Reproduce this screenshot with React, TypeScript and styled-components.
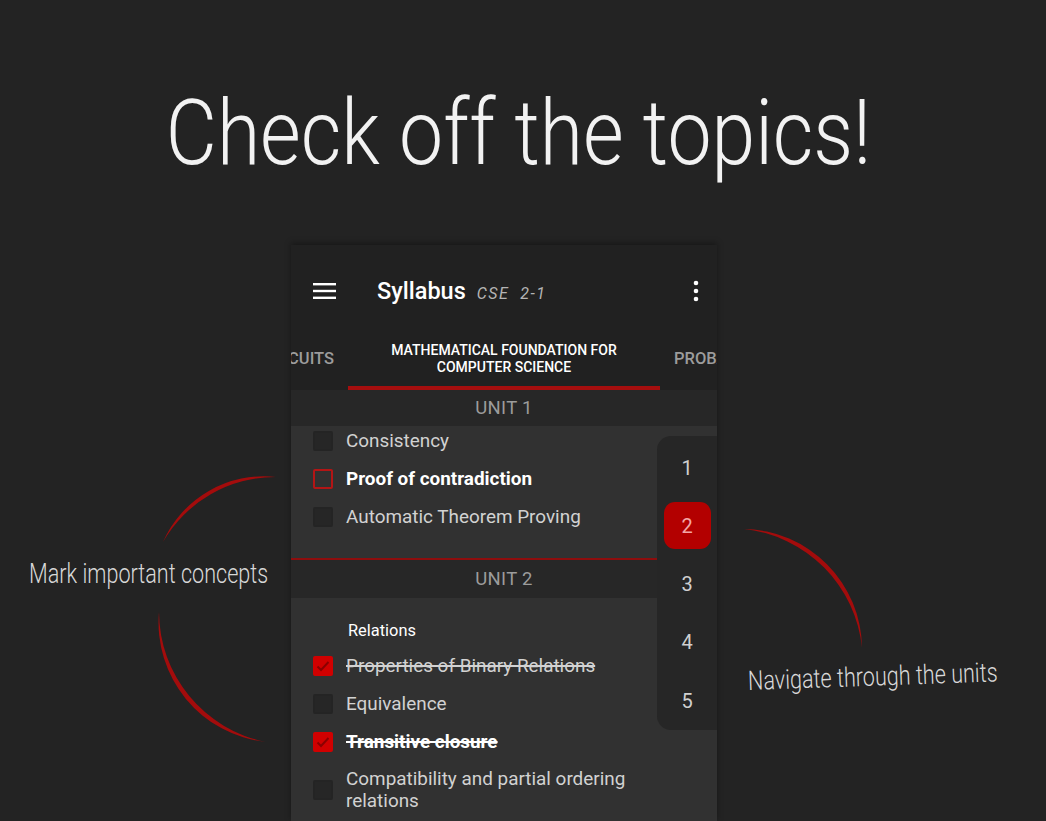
import React from "react";
import styled, { createGlobalStyle } from "styled-components";

const GlobalStyle = createGlobalStyle`
  html, body {
    margin: 0;
    padding: 0;
    background: #232323;
  }
  body {
    font-family: Roboto, "Liberation Sans", sans-serif;
  }
`;

const Page = styled.div`
  position: relative;
  width: 1046px;
  height: 821px;
  overflow: hidden;
  background: #232323;
`;

const Title = styled.h1`
  margin: 0;
  padding: 89px 10px 0 0;
  height: 245px;
  box-sizing: border-box;
  text-align: center;
  font-weight: 300;
  font-size: 90px;
  line-height: 90px;
  color: #f2f2f2;
  white-space: nowrap;
`;

const Condensed = styled.span<{ $scale: number }>`
  display: inline-block;
  transform: scaleX(${(p) => p.$scale});
  transform-origin: center;
`;

const Stage = styled.div`
  display: grid;
  grid-template-columns: 291px 426px 1fr;
  height: 576px;
`;

const Side = styled.div<{ $top: number; $pad: number }>`
  padding-top: ${(p) => p.$top}px;
  padding-left: ${(p) => p.$pad}px;
`;

const Note = styled.div<{ $rotate?: number }>`
  display: inline-block;
  font-weight: 300;
  font-size: 27px;
  line-height: 32px;
  color: #d8d8d8;
  white-space: nowrap;
  transform-origin: left center;
  transform: rotate(${(p) => p.$rotate || 0}deg) scaleX(0.8);
`;

const Phone = styled.div`
  position: relative;
  display: flex;
  flex-direction: column;
  background: #313131;
  box-shadow: 0 -2px 6px rgba(0, 0, 0, 0.35);
  overflow: hidden;
`;

const AppBar = styled.div`
  display: flex;
  align-items: center;
  height: 92px;
  padding: 0 18px 0 22px;
  background: #212121;
`;

const BarTitle = styled.div`
  display: flex;
  align-items: baseline;
  flex: 1;
  margin-left: 40px;
`;

const Heading = styled.span`
  font-size: 23.5px;
  font-weight: 500;
  color: #ffffff;
`;

const Sub = styled.span`
  margin-left: 11px;
  font-size: 16px;
  font-style: italic;
  letter-spacing: 1.5px;
  color: #b4b4b4;
  white-space: pre;
`;

const Tabs = styled.div`
  display: flex;
  justify-content: center;
  height: 53px;
  background: #212121;
  overflow: hidden;
`;

const Tab = styled.div<{ $active?: boolean; $align?: string }>`
  flex: 0 0 auto;
  width: ${(p) => (p.$active ? "312px" : "200px")};
  min-width: 0;
  overflow: hidden;
  display: flex;
  align-items: center;
  justify-content: ${(p) => p.$align || "center"};
  box-sizing: border-box;
  padding: 0 14px 6px;
  text-align: center;
  font-weight: 500;
  font-size: ${(p) => (p.$active ? "14px" : "16.5px")};
  line-height: 17px;
  color: ${(p) => (p.$active ? "#ffffff" : "#9c9c9c")};
  border-bottom: 4px solid ${(p) => (p.$active ? "#a50e0e" : "transparent")};
  white-space: ${(p) => (p.$active ? "normal" : "nowrap")};
`;

const UnitHeader = styled.div<{ $h: number }>`
  height: ${(p) => p.$h}px;
  display: flex;
  align-items: center;
  justify-content: center;
  background: #272727;
  font-size: 18.5px;
  letter-spacing: 0.3px;
  color: #9c9c9c;
`;

const UnitBody = styled.div<{ $mark?: boolean }>`
  display: flex;
  flex-direction: column;
  overflow: hidden;
  padding-right: 60px;
  border-bottom: 2px solid ${(p) => (p.$mark ? "#8e0d0d" : "transparent")};
`;

const Inner = styled.div<{ $shift: number; $bottom: number }>`
  margin-top: ${(p) => p.$shift}px;
  padding-bottom: ${(p) => p.$bottom}px;
`;

const Group = styled.div`
  padding: 22px 0 5px 57px;
  font-size: 16.4px;
  line-height: 22px;
  color: #ffffff;
`;

const Row = styled.div<{ $tall?: boolean }>`
  display: flex;
  align-items: center;
  min-height: 38px;
  padding: ${(p) => (p.$tall ? "7px" : "0")} 0 0 22px;
`;

const Box = styled.div<{ $state: "empty" | "marked" | "checked" }>`
  flex: 0 0 auto;
  box-sizing: border-box;
  width: 20px;
  height: 20px;
  border-radius: 2px;
  margin-right: 13px;
  display: flex;
  align-items: center;
  justify-content: center;
  background: ${(p) =>
    p.$state === "checked" ? "#d00000" : p.$state === "marked" ? "transparent" : "#262626"};
  border: 2px solid
    ${(p) =>
      p.$state === "checked" ? "#d00000" : p.$state === "marked" ? "#b31515" : "#242424"};
`;

const Label = styled.span<{ $bold?: boolean; $done?: boolean }>`
  font-size: 18.9px;
  line-height: 22px;
  font-weight: ${(p) => (p.$bold ? 700 : 400)};
  color: ${(p) => (p.$bold ? "#ffffff" : "#d2d2d2")};
  text-decoration: ${(p) => (p.$done ? "line-through" : "none")};
  text-decoration-thickness: 1.5px;
`;

const Rail = styled.div`
  position: absolute;
  top: 191px;
  right: 0;
  width: 60px;
  height: 294px;
  box-sizing: border-box;
  padding: 8px 0 6px;
  display: flex;
  flex-direction: column;
  justify-content: space-between;
  align-items: center;
  background: #262626;
  border-radius: 14px 0 0 14px;
`;

const RailItem = styled.div<{ $active?: boolean }>`
  width: 47px;
  height: 47px;
  border-radius: 11px;
  display: flex;
  align-items: center;
  justify-content: center;
  font-size: 20px;
  color: ${(p) => (p.$active ? "#f3a7a7" : "#d0d0d0")};
  background: ${(p) => (p.$active ? "#b30000" : "transparent")};
`;

const Arcs = styled.svg`
  position: absolute;
  left: 0;
  top: 0;
  pointer-events: none;
`;

const Menu = () => (
  <svg width="24" height="18" viewBox="0 0 24 18">
    <rect x="0" y="1" width="23" height="2.4" fill="#fff" />
    <rect x="0" y="7.8" width="23" height="2.4" fill="#fff" />
    <rect x="0" y="14.6" width="23" height="2.4" fill="#fff" />
  </svg>
);

const More = () => (
  <svg width="6" height="22" viewBox="0 0 6 22">
    <circle cx="3" cy="3" r="2.3" fill="#fff" />
    <circle cx="3" cy="11" r="2.3" fill="#fff" />
    <circle cx="3" cy="19" r="2.3" fill="#fff" />
  </svg>
);

const Tick = () => (
  <svg width="14" height="12" viewBox="0 0 14 12">
    <path d="M1.5 6.5 L5 10 L12.5 2" stroke="#8a0000" strokeWidth="2" fill="none" />
  </svg>
);

type Item = { text: string; state: "empty" | "marked" | "checked"; bold?: boolean; tall?: boolean };

const unit1: Item[] = [
  { text: "Consistency", state: "empty" },
  { text: "Proof of contradiction", state: "marked", bold: true },
  { text: "Automatic Theorem Proving", state: "empty" },
];

const unit2: Item[] = [
  { text: "Properties of Binary Relations", state: "checked" },
  { text: "Equivalence", state: "empty" },
  { text: "Transitive closure", state: "checked", bold: true },
  { text: "Compatibility and partial ordering relations", state: "empty", tall: true },
];

const TopicRow = ({ item }: { item: Item }) => (
  <Row $tall={item.tall}>
    <Box $state={item.state}>{item.state === "checked" && <Tick />}</Box>
    <Label $bold={item.bold} $done={item.state === "checked"}>
      {item.text}
    </Label>
  </Row>
);

export default function App() {
  return (
    <Page>
      <GlobalStyle />
      <Title>
        <Condensed $scale={0.874}>Check off the topics!</Condensed>
      </Title>
      <Stage>
        <Side $top={313} $pad={29}>
          <Note>Mark important concepts</Note>
        </Side>
        <Phone>
          <AppBar>
            <Menu />
            <BarTitle>
              <Heading>Syllabus</Heading>
              <Sub>CSE  2-1</Sub>
            </BarTitle>
            <More />
          </AppBar>
          <Tabs>
            <Tab $align="flex-end">DIGITAL LOGIC CIRCUITS</Tab>
            <Tab $active>MATHEMATICAL FOUNDATION FOR COMPUTER SCIENCE</Tab>
            <Tab $align="flex-start">PROBABILITY AND STATISTICS</Tab>
          </Tabs>
          <UnitHeader $h={36}>UNIT 1</UnitHeader>
          <UnitBody $mark>
            <Inner $shift={-4} $bottom={22}>
              {unit1.map((it) => (
                <TopicRow key={it.text} item={it} />
              ))}
            </Inner>
          </UnitBody>
          <UnitHeader $h={38}>UNIT 2</UnitHeader>
          <UnitBody>
            <Inner $shift={0} $bottom={0}>
              <Group>Relations</Group>
              {unit2.map((it) => (
                <TopicRow key={it.text} item={it} />
              ))}
            </Inner>
          </UnitBody>
          <Rail>
            {[1, 2, 3, 4, 5].map((n) => (
              <RailItem key={n} $active={n === 2}>
                {n}
              </RailItem>
            ))}
          </Rail>
        </Phone>
        <Side $top={420} $pad={31}>
          <Note $rotate={-2}>Navigate through the units</Note>
        </Side>
      </Stage>
      <Arcs width="1046" height="821" viewBox="0 0 1046 821">
        <path d="M163 542 A110 110 0 0 1 276 477 A130 130 0 0 0 163 542 Z" fill="#a30c0c" />
        <path d="M159 612 A120 120 0 0 0 266 742 A133 133 0 0 1 159 612 Z" fill="#a30c0c" />
        <path d="M744 529 A120 120 0 0 1 862 648 A133 133 0 0 0 744 529 Z" fill="#a30c0c" />
      </Arcs>
    </Page>
  );
}
